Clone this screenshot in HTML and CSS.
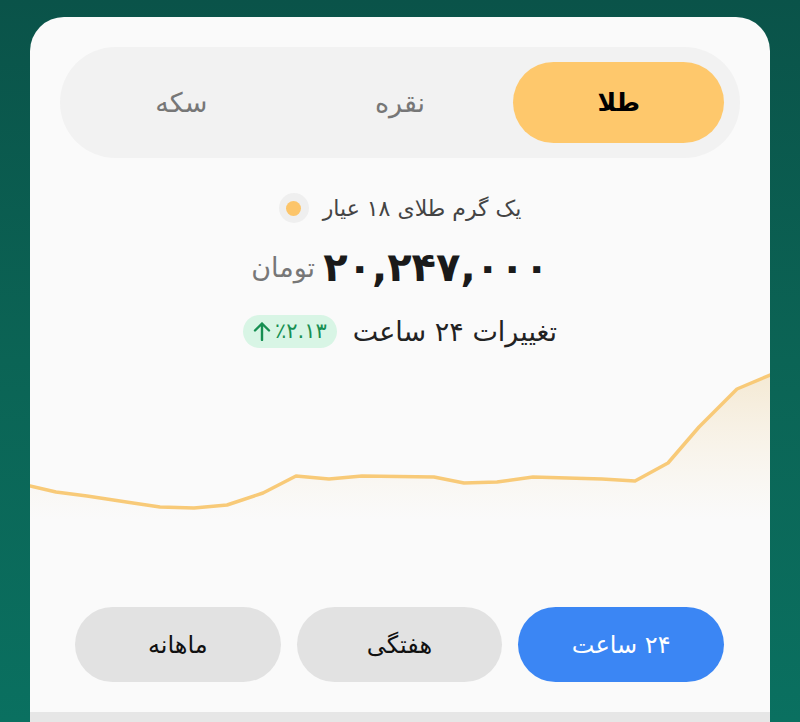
FILE: index.html
```html
<!DOCTYPE html>
<html lang="fa" dir="rtl">
<head>
<meta charset="utf-8">
<link rel="stylesheet" href="styles.css">
</head>
<body>
<div class="card">
  <div class="tabs">
    <div class="tab active">طلا</div>
    <div class="tab">نقره</div>
    <div class="tab">سکه</div>
  </div>
  <div class="label-row">
    <span class="label">یک گرم طلای ۱۸ عیار</span>
    <span class="dot-wrap"><span class="dot"></span></span>
  </div>
  <div class="price-row">
    <span class="price">۲۰,۲۴۷,۰۰۰</span>
    <span class="unit">تومان</span>
  </div>
  <div class="change-row">
    <span class="change-label">تغییرات ۲۴ ساعت</span>
    <span class="badge">
      <svg class="arrow" width="18" height="20" viewBox="0 0 18 20"><path d="M9 19V2.5M2 9.5L9 2.5l7 7" fill="none" stroke="#178f52" stroke-width="2.4" stroke-linecap="round" stroke-linejoin="round"/></svg>
      <span class="pct">٪۲.۱۳</span>
    </span>
  </div>
  <div class="chart">
    <svg width="740" height="230" viewBox="30 360 740 230">
      <defs>
        <linearGradient id="fill" x1="0" y1="370" x2="0" y2="520" gradientUnits="userSpaceOnUse">
          <stop offset="0" stop-color="#e9c98a" stop-opacity="0.35"/>
          <stop offset="1" stop-color="#f3dcae" stop-opacity="0"/>
        </linearGradient>
      </defs>
      <path d="M30 486 L56 492 L87 496 L133 503 L160 507 L194 508 L227 505 L263 493 L296 476 L329 479 L362 476 L434 477 L464 483 L497 482 L533 477 L602 479 L635 481 L668 463 L699 427 L737 389 L770 375 L770 590 L30 590 Z" fill="url(#fill)"/>
      <path d="M30 486 L56 492 L87 496 L133 503 L160 507 L194 508 L227 505 L263 493 L296 476 L329 479 L362 476 L434 477 L464 483 L497 482 L533 477 L602 479 L635 481 L668 463 L699 427 L737 389 L770 375" fill="none" stroke="#f8ca78" stroke-width="3.5" stroke-linejoin="round" stroke-linecap="round"/>
    </svg>
  </div>
  <div class="ranges">
    <div class="range active">۲۴ ساعت</div>
    <div class="range">هفتگی</div>
    <div class="range">ماهانه</div>
  </div>
  <div class="strip"></div>
</div>
</body>
</html>
```

FILE: styles.css
```css
html, body {
  margin: 0;
  padding: 0;
}
body {
  width: 800px;
  height: 722px;
  overflow: hidden;
  background: linear-gradient(180deg, #0a5349 0%, #0b6455 50%, #0a7060 100%);
  font-family: "DejaVu Sans", "Noto Sans", sans-serif;
}
.card {
  margin: 17px 30px 0;
  height: 705px;
  background: #fafafa;
  border-radius: 34px 34px 0 0;
  padding-top: 30px;
  box-sizing: border-box;
  display: flex;
  flex-direction: column;
  overflow: hidden;
}
.card > * {
  flex-shrink: 0;
}
.tabs {
  margin: 0 30px;
  height: 111px;
  box-sizing: border-box;
  padding: 15px 16px;
  background: #f2f2f2;
  border-radius: 56px;
  display: grid;
  grid-template-columns: 1fr 1fr 1fr;
  gap: 8px;
}
.tab {
  display: flex;
  align-items: center;
  justify-content: center;
  font-size: 27px;
  color: #777;
  border-radius: 41px;
}
.tab.active {
  background: #fec86c;
  color: #000;
  font-size: 25px;
  font-weight: bold;
}
.label-row {
  margin-top: 35px;
  height: 30px;
  display: flex;
  align-items: center;
  justify-content: center;
  gap: 14px;
}
.label {
  font-size: 22px;
  color: #444;
}
.dot-wrap {
  width: 30px;
  height: 30px;
  border-radius: 50%;
  background: #efefef;
  display: flex;
  align-items: center;
  justify-content: center;
}
.dot {
  width: 15px;
  height: 15px;
  border-radius: 50%;
  background: #fcc56a;
}
.price-row {
  margin-top: 23px;
  height: 42px;
  display: flex;
  align-items: center;
  justify-content: center;
  gap: 8px;
}
.price {
  font-size: 40px;
  font-weight: bold;
  color: #1a1a1a;
}
.unit {
  font-size: 27px;
  color: #777;
}
.change-row {
  margin-top: 26px;
  height: 34px;
  display: flex;
  align-items: center;
  justify-content: center;
  gap: 16px;
}
.change-label {
  font-size: 27px;
  color: #222;
}
.badge {
  direction: ltr;
  display: flex;
  align-items: center;
  gap: 4px;
  height: 33px;
  padding: 0 10px;
  border-radius: 17px;
  background: #d8f5e5;
  color: #178f52;
}
.pct {
  font-size: 21px;
  unicode-bidi: isolate;
}
.chart {
  margin-top: 12px;
  height: 230px;
}
.chart svg {
  display: block;
}
.ranges {
  margin: 17px 46px 0 45px;
  display: grid;
  grid-template-columns: 1fr 1fr 1fr;
  gap: 16px;
}
.range {
  height: 75px;
  border-radius: 38px;
  background: #e2e2e2;
  color: #111;
  font-size: 24px;
  display: flex;
  align-items: center;
  justify-content: center;
}
.range.active {
  background: #3b86f4;
  color: #fff;
}
.strip {
  margin-top: 30px;
  height: 20px;
  background: #e6e6e6;
}
```
